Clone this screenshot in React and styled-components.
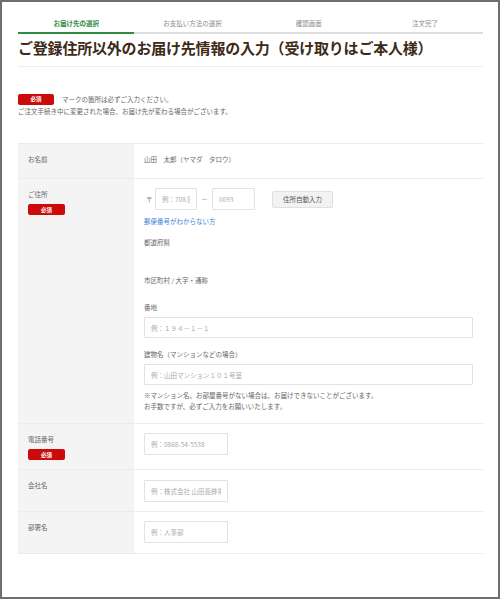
import React from 'react'
import styled, { createGlobalStyle } from 'styled-components'

const GlobalStyle = createGlobalStyle`
    html, body {
        margin: 0;
        padding: 0;
        background: #fff;
    }
    body {
        font-family: "Noto Sans CJK JP", "Noto Sans", sans-serif;
        color: #666;
    }
`;

const Frame = styled.div`
    box-sizing: border-box;
    width: 100%;
    min-height: 100vh;
    border: 2px solid #6f6f6f;
    background: #fff;
    padding: 0 15px 0 16px;
`;

const Steps = styled.ol`
    display: grid;
    grid-template-columns: repeat(4, 1fr);
    list-style: none;
    margin: 0;
    padding: 0;
`;

const Step = styled.li`
    text-align: center;
    font-size: 6.5px;
    line-height: 10px;
    padding: 16px 0 4px;
    border-bottom: 2px solid ${p => (p.$active ? '#2e8b40' : '#dedede')};
    color: ${p => (p.$active ? '#2e8b40' : '#888')};
    font-weight: ${p => (p.$active ? 700 : 400)};
`;

const Title = styled.h1`
    margin: 4px 0 0;
    padding-bottom: 8px;
    border-bottom: 1px solid #eee;
    font-size: 15px;
    line-height: 20px;
    letter-spacing: -0.2px;
    font-weight: 700;
    color: #3d2a17;
`;

const Notice = styled.div`
    margin-top: 26px;
    font-size: 6.5px;
    line-height: 12px;
    color: #666;

    p {
        margin: 0;
        display: flex;
        align-items: center;
    }
`;

const Badge = styled.span`
    display: inline-flex;
    align-items: center;
    justify-content: center;
    width: ${p => p.$width || 37}px;
    height: 11px;
    border-radius: 2px;
    background: #cc0a0a;
    color: #fff;
    font-size: 5.5px;
    font-weight: 700;
    margin-right: ${p => p.$gap || 0}px;
`;

const Table = styled.div`
    margin-top: 26px;
    border-top: 1px solid #ebebeb;
`;

const Row = styled.div`
    display: grid;
    grid-template-columns: 116px 1fr;
    border-bottom: 1px solid #ebebeb;
`;

const Label = styled.div`
    background: #f4f4f4;
    padding: 9px 10px;
    font-size: 6.5px;
    line-height: 12px;
    color: #666;
    display: flex;
    flex-direction: column;
    align-items: flex-start;
    gap: 4px;
`;

const Value = styled.div`
    padding: ${p => p.$pad || '9px 10px 10px'};
    font-size: 6.5px;
    line-height: 12px;
    color: #666;
    display: flex;
    flex-direction: column;
    align-items: flex-start;
`;

const TextInput = styled.input`
    box-sizing: border-box;
    width: ${p => p.$width || 84}px;
    height: ${p => p.$height || 22}px;
    margin: ${p => p.$mt || 0}px 0 0;
    padding: 0 6px;
    border: 1px solid #e2e2e2;
    border-radius: 1px;
    background: #fff;
    font-family: inherit;
    font-size: 6.5px;
    color: #666;
    outline: none;

    &::placeholder {
        color: #aaa;
    }
`;

const PostalRow = styled.div`
    display: flex;
    align-items: center;
    height: 22px;
`;

const Mark = styled.span`
    width: 9px;
    padding-left: 2px;
    color: #777;
`;

const Dash = styled.span`
    width: 15px;
    text-align: center;
    color: #888;
`;

const AutoButton = styled.button`
    margin-left: 17px;
    width: 61px;
    height: 17px;
    border: 1px solid #e0e0e0;
    border-radius: 2px;
    background: #f2f2f2;
    font-family: inherit;
    font-size: 6.5px;
    color: #555;
    padding: 0;
`;

const HelpLink = styled.a`
    margin-top: 5px;
    color: #3a7fd4;
    text-decoration: none;
`;

const FieldName = styled.div`
    margin-top: ${p => p.$mt}px;
    color: #666;
`;

const Note = styled.p`
    margin: 5px 0 0;
    line-height: 11px;
    color: #666;
`;

const steps = ['お届け先の選択', 'お支払い方法の選択', '確認画面', '注文完了']

export default function App() {
    return (
        <>
            <GlobalStyle />
            <Frame>
                <Steps>
                    {steps.map((s, i) => (
                        <Step key={s} $active={i === 0}>{s}</Step>
                    ))}
                </Steps>
                <Title>ご登録住所以外のお届け先情報の入力（受け取りはご本人様）</Title>

                <Notice>
                    <p><Badge $width={36} $gap={8}>必須</Badge>マークの箇所は必ずご入力ください。</p>
                    <p>ご注文手続き中に変更された場合、お届け先が変わる場合がございます。</p>
                </Notice>

                <Table>
                    <Row>
                        <Label>お名前</Label>
                        <Value $pad="9px 10px 13px">山田　太郎（ヤマダ　タロウ）</Value>
                    </Row>
                    <Row>
                        <Label>
                            ご住所
                            <Badge>必須</Badge>
                        </Label>
                        <Value $pad="9px 10px 11px">
                            <PostalRow>
                                <Mark>〒</Mark>
                                <TextInput $width={42} placeholder="例：708 回" />
                                <Dash>－</Dash>
                                <TextInput $width={43} placeholder="0093" />
                                <AutoButton type="button">住所自動入力</AutoButton>
                            </PostalRow>
                            <HelpLink href="#">郵便番号がわからない方</HelpLink>
                            <FieldName $mt={9}>都道府県</FieldName>
                            <FieldName $mt={26}>市区町村 / 大字・通称</FieldName>
                            <FieldName $mt={15}>番地</FieldName>
                            <TextInput $width={329} $height={21} $mt={4} placeholder="例：１９４－１－１" />
                            <FieldName $mt={10}>建物名（マンションなどの場合）</FieldName>
                            <TextInput $width={329} $height={21} $mt={4} placeholder="例：山田マンション１０１号室" />
                            <Note>
                                ※マンション名、お部屋番号がない場合は、お届けできないことがございます。<br />
                                お手数ですが、必ずご入力をお願いいたします。
                            </Note>
                        </Value>
                    </Row>
                    <Row>
                        <Label>
                            電話番号
                            <Badge>必須</Badge>
                        </Label>
                        <Value>
                            <TextInput placeholder="例：0868-54-5538" />
                        </Value>
                    </Row>
                    <Row>
                        <Label>会社名</Label>
                        <Value $pad="10px 10px 9px">
                            <TextInput placeholder="例：株式会社 山田養蜂場本社" />
                        </Value>
                    </Row>
                    <Row>
                        <Label>部署名</Label>
                        <Value $pad="9px 10px 10px">
                            <TextInput placeholder="例：人事部" />
                        </Value>
                    </Row>
                </Table>
            </Frame>
        </>
    )
}
